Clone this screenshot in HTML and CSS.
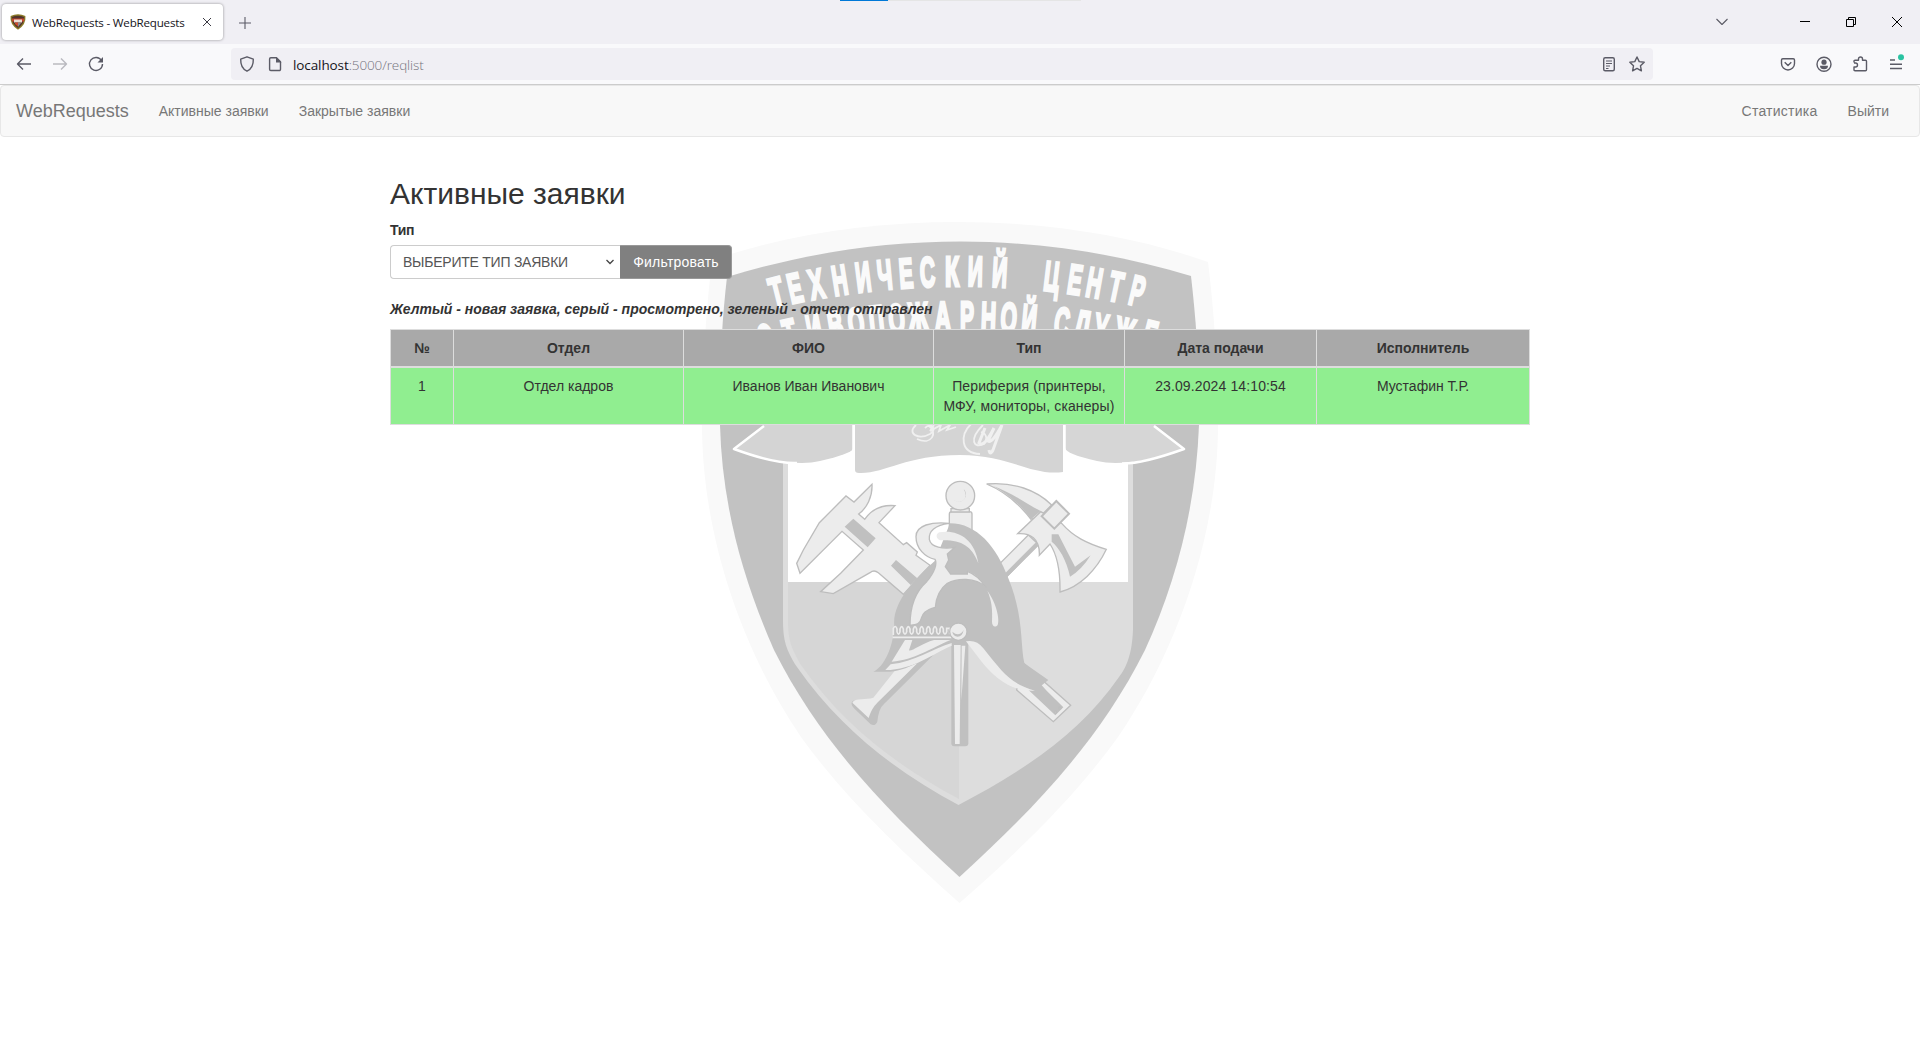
FILE: index.html
```html
<!DOCTYPE html>
<html lang="ru">
<head>
<meta charset="utf-8">
<title>WebRequests - WebRequests</title>
<link rel="stylesheet" href="styles.css">
</head>
<body>
<div class="tabstrip">
  <div class="progress"></div>
  <div class="tab">
    <svg class="icon" viewBox="0 0 16 16"><path d="M.6 2Q8-1.4 15.4 2 16.4 10.500 8 15.700-.4 10.500.6 2Z" fill="#8a7a28"/><path d="M1.800 3Q8 .6 14.200 3 14.600 9.500 8 14 1.400 9.500 1.800 3Z" fill="#51352c"/><path d="M2 4.500h12v3H2z" fill="#c8452e"/><path d="M4 5.500h8v3H4z" fill="#eadcd2"/><path d="M5 8.500h3v4L5 10z" fill="#cf4b2d"/><path d="M8 9h3l-3 4z" fill="#888b90"/></svg>
    <span class="tab-title">WebRequests - WebRequests</span>
    <svg class="icon tab-close" viewBox="0 0 16 16"><path d="M4 4l8 8M12 4l-8 8" class="ln dark"/></svg>
  </div>
  <svg class="icon new-tab" viewBox="0 0 16 16"><path d="M8 2v12M2 8h12" class="ln"/></svg>
  <div class="window-controls">
    <svg class="icon" viewBox="0 0 16 16"><path d="M2.500 5L8 10.500 13.500 5" class="ln"/></svg>
    <svg class="icon sys first" viewBox="0 0 16 16"><path d="M3 7.500h10" class="ln black"/></svg>
    <svg class="icon sys" viewBox="0 0 16 16"><path d="M3.500 5.500h7v7h-7zM5.500 5V3.500h7v7H11" class="ln black"/></svg>
    <svg class="icon sys" viewBox="0 0 16 16"><path d="M3 3l10 10M13 3L3 13" class="ln black"/></svg>
  </div>
</div>
<div class="toolbar">
  <svg class="icon" viewBox="0 0 16 16"><path d="M15 8H1.500M7 2.500L1.500 8 7 13.500" class="ln w"/></svg>
  <svg class="icon faded" viewBox="0 0 16 16"><path d="M1 8h13.500M9 2.500L14.500 8 9 13.500" class="ln w"/></svg>
  <svg class="icon" viewBox="0 0 16 16"><path d="M13.500 4.500A6.500 6.500 0 1 0 14.500 8" class="ln w"/><path d="M15 1v5.500h-5.500z" fill="#5b5b66"/></svg>
  <div class="urlbar">
    <svg class="icon" viewBox="0 0 16 16"><path d="M8 .8L14.300 3.200C14.500 9 12.500 13 8 15.200 3.500 13 1.500 9 1.700 3.200Z" class="ln w"/></svg>
    <svg class="icon page" viewBox="0 0 16 16"><path d="M3.800 1.700h5.700l4 4v7.600a1.200 1.200 0 0 1-1.200 1.200H3.800a1.200 1.200 0 0 1-1.200-1.200V2.900a1.200 1.200 0 0 1 1.200-1.200z" class="ln w"/><path d="M9 1v5.500h5.500z" fill="#5b5b66"/></svg>
    <span class="url"><span class="host">localhost</span>:5000/reqlist</span>
    <svg class="icon" viewBox="0 0 16 16"><rect x="2.700" y="1.700" width="10.600" height="13" rx="1.500" class="ln w"/><path d="M5 5h6M5 7.500h6M5 10h4M5 12.500h2.500" class="ln"/></svg>
    <svg class="icon star" viewBox="0 0 16 16"><path d="M8 1l2.200 4.600 5 .7-3.700 3.500.9 5L8 12.400l-4.400 2.400.9-5L.8 6.300l5-.7z" class="ln w"/></svg>
  </div>
  <div class="actions">
    <svg class="icon" viewBox="0 0 16 16"><path d="M2.800 2.700h10.400c.8 0 1.300.5 1.300 1.300v3.500a6.500 6.500 0 0 1-13 0V4c0-.8.500-1.300 1.300-1.300zM4.700 6.300L8 9.500l3.300-3.200" class="ln w"/></svg>
    <svg class="icon" viewBox="0 0 16 16"><circle cx="8" cy="8.200" r="7" class="ln w"/><circle cx="8" cy="6.200" r="2.600" fill="#5b5b66"/><path d="M4 9.800h8a4 3.500 0 0 1-8 0z" fill="#5b5b66"/></svg>
    <svg class="icon" viewBox="0 0 16 16"><path d="M2 6.500V5.200c0-.6.400-1 1-1h3.500V3a2 2 0 0 1 4 0v1.200h3c.6 0 1 .4 1 1v8.600c0 .6-.4 1-1 1H3c-.6 0-1-.4-1-1V11h1.500a2 2 0 0 0 0-4H2" class="ln w"/></svg>
    <svg class="icon" viewBox="0 0 16 16"><path d="M2 4h5M2 8.300h12M2 12.500h12" class="ln w"/><circle cx="13" cy="1.300" r="3" fill="#2ac3a2"/></svg>
  </div>
</div>
<nav class="navbar">
  <a class="brand">WebRequests</a>
  <a>Активные заявки</a>
  <a>Закрытые заявки</a>
  <span class="spacer"></span>
  <a class="stats">Статистика</a>
  <a>Выйти</a>
</nav>
<main class="page-body">
  <svg class="emblem" viewBox="690 215 540 700">
    <path d="M959.500 903C900 850 845 798 801 737 745 655 702 540 702 424 702 370 706 310 712 260 860 209 1060 209 1208 262 1214 310 1218 370 1218 424 1218 540 1174 655 1118 737 1074 798 1020 850 959.500 903Z" fill="#f9f9f9"/>
    <path d="M959.500 877C884 808 819 740 774 650 743 580 722 505 720 425 719 370 722 320 727 277 880 230 1040 230 1191 276 1196 320 1200 370 1199 425 1196 505 1177 580 1145 650 1100 740 1035 808 959.500 877Z" fill="#c2c2c2"/>
    <g class="motto">
      <text transform="translate(780 306.300) rotate(-14) scale(.53 1)">Т</text><text transform="translate(798 302.300) rotate(-12.500) scale(.5 1)">Е</text><text transform="translate(819 298.300) rotate(-10.900) scale(.53 1)">Х</text><text transform="translate(842 294.600) rotate(-9) scale(.5 1)">Н</text><text transform="translate(865 291.600) rotate(-7.300) scale(.5 1)">И</text><text transform="translate(886 289.200) rotate(-5.500) scale(.5 1)">Ч</text><text transform="translate(907 287.700) rotate(-4) scale(.5 1)">Е</text><text transform="translate(928 286.600) rotate(-2.500) scale(.5 1)">С</text><text transform="translate(952 286) scale(.55 1)">К</text><text transform="translate(975 286) rotate(1.200) scale(.5 1)">И</text><text transform="translate(999 287) rotate(3) scale(.5 1)">Й</text>
      <text transform="translate(1050 291) rotate(6.800) scale(.5 1)">Ц</text><text transform="translate(1073 294) rotate(8.700) scale(.5 1)">Е</text><text transform="translate(1092 297) rotate(10.200) scale(.5 1)">Н</text><text transform="translate(1113 301) rotate(11.900) scale(.53 1)">Т</text><text transform="translate(1134 305) rotate(13.400) scale(.5 1)">Р</text>
      <text transform="translate(770 353) rotate(-14.600) scale(.5 1)">О</text><text transform="translate(793 348) rotate(-12.900) scale(.5 1)">Т</text><text transform="translate(817 343.700) rotate(-11) scale(.5 1)">И</text><text transform="translate(838 340) rotate(-9.400) scale(.5 1)">В</text><text transform="translate(858 337.500) rotate(-7.900) scale(.5 1)">О</text><text transform="translate(878 335) rotate(-6.300) scale(.5 1)">П</text><text transform="translate(898 333.500) rotate(-4.900) scale(.5 1)">О</text><text transform="translate(919 332) rotate(-3.200) scale(.53 1)">Ж</text><text transform="translate(943 331) rotate(-1) scale(.53 1)">А</text><text transform="translate(967 331) scale(.5 1)">Р</text><text transform="translate(988 331.500) rotate(2) scale(.5 1)">Н</text><text transform="translate(1008 332.400) rotate(3.700) scale(.5 1)">О</text><text transform="translate(1028 334) rotate(5.200) scale(.5 1)">Й</text>
      <text transform="translate(1060 337) rotate(7.800) scale(.5 1)">С</text><text transform="translate(1080 340) rotate(9.200) scale(.5 1)">Л</text><text transform="translate(1098 343) rotate(10.600) scale(.5 1)">У</text><text transform="translate(1121 347) rotate(12.500) scale(.53 1)">Ж</text><text transform="translate(1147 350) rotate(14.400) scale(.5 1)">Б</text>
    </g>
    <!-- inner field -->
    <path d="M783 420H1133V630C1132 655 1126 668 1119 677 1079 735 1021 772 958.500 805 897 772 841 730 797 667 786 650 783 640 783 620Z" fill="#ddd"/>
    <path d="M788 582H959V799C897 766 843 725 801 665 791 648 788 640 788 620Z" fill="#d6d6d6"/>
    <path d="M788 420H1128V582H788Z" fill="#fff"/>
    <!-- ribbon -->
    <path d="M764 425L733 449Q790 468 820 461T853 449V425Z" fill="#d4d4d4"/>
    <path d="M1155 425L1184 449Q1128 468 1097 461T1065 448V425Z" fill="#d6d6d6"/>
    <path d="M764 426L734 449Q775 464 797 463M1154 426L1184 449Q1142 464 1122 463.500" fill="none" stroke="#fff" stroke-width="2.500" stroke-linejoin="round"/>
    <path d="M853.500 424V450M1064.500 424V450" stroke="#fff" stroke-width="2.500"/>
    <path d="M855 420H1063V472C1030 476 1010 455 960 455 905 455 885 474 859 473Q855 473 855 470Z" fill="#d4d4d4"/>
    <g fill="none" stroke="#f0f0f0" stroke-width="1.800"><path d="M916 425C906 434 919 440 930 434 938 429 931 422 925 428M917 439C932 446 938 432 929 426M934 425L930 431 941 425 939 431 950 425 947 430 956 427M971 424C960 435 960 453 980 454M983 425C968 440 974 449 984 444 987 441 988 434 981 432" /><path d="M985 428L979 443Q984 448 994 428L988 441Q992 444 1002 425L993 450Q990 456 989 450" stroke-width="3"/></g>
    <!-- caliper -->
    <g transform="translate(690 410) scale(.33333)" class="metal">
      <path d="M320 460L340 420 388 338 468 258 492 276 546 223C548 260 530 295 506 312L524 328C540 305 570 283 615 287L567 338 640 404 650 398 682 426 678 436 720 466 640 553 565 488Q552 478 540 488L430 551 392 545 452 490 520 420 456 364 330 490Z"/>
      <path class="shade" d="M490 326L557 385 533 412 464 350ZM618 450L682 505 662 525 603 467Z"/>
    </g>
    <!-- axe -->
    <g transform="translate(950 410) scale(.33333)" class="metal">
      <path d="M235 375L130 480 155 515 265 403Z"/><path class="shade" d="M258 397L155 500 165 508 268 405Z"/>
      <path d="M110 222C190 215 260 240 305 285L272 318 243 328C210 285 165 245 110 222Z"/>
      <path class="shade" d="M130 228C190 250 235 285 272 303L243 328C215 285 170 250 130 228Z"/>
      <path d="M272 305L203 371C240 368 270 385 268 436L300 402C325 440 331 490 330 546 390 530 440 480 469 418 410 400 370 380 335 340Z"/>
      <path class="shade" d="M305 373H325L375 470 422 436Q395 480 360 500C350 450 325 410 305 395Z"/>
      <path d="M319 273L357 311 313 356 275 319Z" stroke-width="6"/>
    </g>
    <!-- handles below the helmet -->
    <g transform="translate(840 600) scale(.33333)" class="metal">
      <path class="shade" d="M220 185L100 300 40 302Q28 308 42 325L92 373Q105 380 112 365 116 325 132 312L280 165Z"/>
      <path d="M168 208L100 293C80 300 45 292 37 308L86 354C95 325 105 315 118 302L232 190Z" stroke="none"/>
      <path d="M530 270L640 365 692 316 545 185Z"/>
      <path class="shade" d="M545 190L620 272 670 322 646 346 560 265Z"/><circle cx="647" cy="336" r="3"/><circle cx="660" cy="324" r="3"/>
      <rect class="shade" x="334" y="120" width="51" height="319" rx="9"/>
      <path d="M342 135H362L359 432H345ZM365 137H376L364 300Z" stroke="none"/>
    </g>
    <!-- helmet -->
    <g transform="translate(860 470) scale(.33333)" class="metal">
      <path d="M268 132Q268 125 275 125H329Q336 125 336 132V210H268Z"/><path d="M273 116h55v10h-55z"/>
      <circle cx="301" cy="77" r="43"/><path d="M311 57A22 22 0 1 1 279 87Q292 102 308 92 322 78 311 57Z" class="shade"/><circle cx="298" cy="76" r="19" stroke="none"/>
      <path class="shade" d="M225 272C160 330 95 400 103 470 98 535 72 590 40 605H90C180 595 230 530 290 518H330C380 560 440 660 525 662L565 630 493 580C480 520 492 440 445 325 410 230 350 160 270 160Z"/>
      <path d="M168 200C168 165 215 155 268 160 225 165 205 185 208 208 212 232 250 238 285 232L262 252 266 270 256 290 272 312H322V304C345 312 360 325 378 352 345 320 290 325 262 340 235 360 228 390 226 412 190 422 188 435 184 445 180 462 172 464 150 466 150 420 160 370 200 335 225 305 232 280 225 268 195 262 168 235 168 200Z"/>
      <path stroke="none" d="M238 187C290 177 345 205 355 280 335 225 300 208 240 211 228 206 226 192 238 187ZM382 362C410 400 420 450 413 465 405 475 396 468 396 455 398 420 395 390 382 362Z"/>
      <path stroke="none" d="M135 510H157L147 541C152 547 185 520 222 510H272C210 535 165 570 95 575ZM92 583C165 575 215 537 275 519V527C220 550 160 600 76 600ZM318 514Q350 508 370 535C430 610 450 640 525 662 455 665 405 625 365 575Z"/>
      <path d="M98 502H275" fill="none" stroke="#ececec" stroke-width="5"/>
      <path d="M100 495V475Q107 463 111 477V485Q116 500 120 485V477Q125 463 130 477V485Q135 500 140 485V477Q145 463 150 477V485Q155 500 160 485V477Q165 463 170 477V485Q175 500 180 485V477Q185 463 190 477V485Q195 500 200 485V477Q205 463 210 477V485Q215 500 220 485V477Q225 463 230 477V485Q235 500 240 485V477Q245 463 250 477V485Q255 500 260 485V475H269V493" fill="none" stroke="#ececec" stroke-width="5"/>
      <circle cx="295" cy="485" r="26"/><path d="M277 485Q297 503 311 480 307 500 293 500 279 498 277 485Z" class="shade"/>
    </g>
  </svg>
  <div class="container">
    <h2>Активные заявки</h2>
    <label class="field-label">Тип</label>
    <div class="filter">
      <div class="select"><span>ВЫБЕРИТЕ ТИП ЗАЯВКИ</span><svg class="caret" viewBox="0 0 10 10"><path d="M1.500 3L5 6.500 8.500 3" fill="none" stroke="#444" stroke-width="1.300"/></svg></div>
      <button class="btn">Фильтровать</button>
    </div>
    <p class="legend">Желтый - новая заявка, серый - просмотрено, зеленый - отчет отправлен</p>
    <table class="table">
      <colgroup><col class="c1"><col class="c2"><col class="c3"><col class="c4"><col class="c5"><col class="c6"></colgroup>
      <thead><tr><th>№</th><th>Отдел</th><th>ФИО</th><th>Тип</th><th>Дата подачи</th><th>Исполнитель</th></tr></thead>
      <tbody><tr><td>1</td><td>Отдел кадров</td><td>Иванов Иван Иванович</td><td class="spaced">Периферия (принтеры, МФУ, мониторы, сканеры)</td><td class="spaced">23.09.2024 14:10:54</td><td>Мустафин Т.Р.</td></tr></tbody>
    </table>
  </div>
</main>
</body>
</html>
```
FILE: styles.css
```css
* { box-sizing: border-box; }
body {
  margin: 0;
  height: 1040px;
  overflow: hidden;
  background: #fff;
  color: #333;
  font: 14px/20px "Liberation Sans", Arial, sans-serif;
}
.icon { display: block; flex: none; width: 16px; height: 16px; overflow: visible; }
.ln { fill: none; stroke: #5b5b66; stroke-width: 1.1; stroke-linejoin: round; }
.ln.w { stroke-width: 1.4; }
.ln.dark { stroke: #26252f; }
.ln.black { stroke: #000; stroke-width: 1; stroke-linejoin: miter; }
.faded { opacity: .4; }

.tabstrip { position: relative; display: flex; align-items: center; height: 44px; background: #f0eff4; }
.progress {
  position: absolute; top: 0; left: 840px; width: 241px; height: 1px;
  background: linear-gradient(90deg, #0078d7 48px, #e5e5e5 48px);
}
.tab {
  display: flex; align-items: center; width: 221px; height: 36px; margin-left: 2px; padding: 0 8px;
  background: #fff; border-radius: 4px; box-shadow: 0 0 3px rgba(0, 0, 0, .4);
}
.tab-title { margin-left: 6px; padding-top: 1px; color: #15141a; font: 11.6px/16px "Open Sans", sans-serif; letter-spacing: -.2px; white-space: nowrap; }
.tab-close { margin-left: auto; }
.tab-close .ln { stroke-width: .9; }
.new-tab { margin: 1px 0 0 14px; }
.window-controls { display: flex; margin-left: auto; padding-right: 15px; }
.sys { margin-left: 30px; }
.sys.first { margin-left: 67px; }

.toolbar {
  display: flex; align-items: center; gap: 20px; height: 41px; padding: 0 16px;
  background: #f9f9fb; border-bottom: 1px solid #ccc;
}
.urlbar {
  display: flex; align-items: center; width: 1422px; height: 32px; margin-left: 107px; padding: 0 8px;
  background: #f0eff4; border-radius: 4px;
}
.page { margin-left: 12px; }
.url { flex: 1; margin-left: 10px; padding-top: 2px; color: #74737d; font: 300 13.5px/20px "Open Sans", sans-serif; letter-spacing: -.1px; }
.host { color: #15141a; font-weight: 400; }
.star { margin-left: 12px; }
.actions { display: flex; gap: 20px; margin-left: auto; }

.navbar {
  display: flex; align-items: center; height: 52px; padding: 0 15px;
  background: #f8f8f8; border: 1px solid #e7e7e7; border-radius: 4px; color: #777;
}
.navbar a { padding: 0 15px; }
.navbar .brand { padding-left: 0; font-size: 18px; }
.navbar .stats { letter-spacing: .25px; }
.spacer { flex: 1; }

.page-body { position: relative; padding-top: 40px; }
.emblem { position: absolute; left: 690px; top: 78px; width: 540px; height: 700px; }
.motto text { fill: #fafafa; stroke: #fafafa; stroke-width: 3; font: bold 42px "Liberation Sans", sans-serif; text-anchor: middle; }
.metal { fill: #ececec; stroke: #bdbdbd; stroke-width: 4; }
.metal .shade { fill: #c0c0c0; stroke: none; }

.container { position: relative; width: 1140px; margin: 0 auto; }
h2 { margin: 0 0 10px; font-size: 30px; line-height: 33px; font-weight: 500; }
.field-label { display: block; margin-bottom: 5px; font-weight: 700; letter-spacing: -.3px; }
.filter { display: flex; }
.select {
  display: flex; align-items: center; justify-content: space-between; width: 230px; height: 34px; padding: 0 5px 0 12px;
  background: #fff; border: 1px solid #ccc; border-right: 0; border-radius: 4px 0 0 4px; color: #555; letter-spacing: -.24px;
}
.caret { width: 10px; height: 10px; }
.btn {
  width: 112px; height: 34px; padding: 0; background: gray; border: 1px solid #999; border-left-color: gray; border-radius: 0 4px 4px 0;
  color: #fff; font: inherit; letter-spacing: .2px;
}
.legend { margin: 20px 0 10px; font-weight: 700; font-style: italic; }
.table { width: 1139px; table-layout: fixed; border-collapse: collapse; text-align: center; }
.table th, .table td { padding: 8px; border: 1px solid #ddd; vertical-align: top; }
.table th { background: #a9a9a9; border-bottom-width: 2px; }
.table td { background: #90ee90; }
.table .spaced { letter-spacing: .12px; }
.c1 { width: 63px; }
.c2 { width: 230px; }
.c3 { width: 250px; }
.c4 { width: 191px; }
.c5 { width: 192px; }
.c6 { width: 213px; }
```
